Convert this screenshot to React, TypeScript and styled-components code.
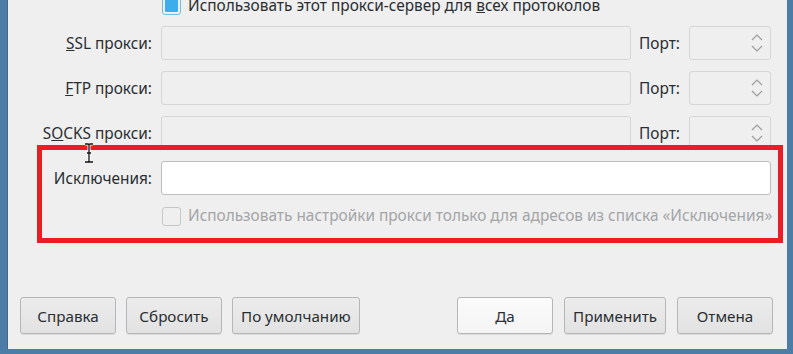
import * as React from 'react'
import styled, { createGlobalStyle } from 'styled-components'

const GlobalStyle = createGlobalStyle`
  html, body {
    margin: 0;
    padding: 0;
    background: #efefef;
  }
  body {
    font-family: "Noto Sans", "Open Sans", sans-serif;
    font-size: 15.4px;
    color: #2a2e32;
  }
`

const Window = styled.div`
  position: relative;
  width: 793px;
  height: 354px;
  box-sizing: border-box;
  background: #efefef;
  border-left: 7px solid #4c7da6;
  border-right: 6px solid #4c7da6;
  border-bottom: 5px solid #4c7da6;
  box-shadow: inset 1px 0 0 #3a6a92;
  display: flex;
  flex-direction: column;
  overflow: hidden;
`

const Form = styled.div`
  display: grid;
  grid-template-columns: 145px 470px 40px 82px;
  grid-template-rows: 20px 34px 34px 34px 34px 20px;
  column-gap: 9px;
  row-gap: 11px;
  margin-top: -5px;
`

const TopRow = styled.div`
  grid-column: 2 / -1;
  display: flex;
  margin-top: 1px;
`

const Label = styled.div<{ $start?: boolean }>`
  justify-self: ${p => (p.$start ? 'start' : 'end')};
  align-self: center;
  white-space: nowrap;
  line-height: 20px;
  margin-top: 2px;
  margin-left: ${p => (p.$start ? '-1px' : '0')};
`

const Field = styled.div<{ $wide?: boolean; $enabled?: boolean }>`
  grid-column: ${p => (p.$wide ? '2 / -1' : 'auto')};
  box-sizing: border-box;
  height: 34px;
  border: 1px solid ${p => (p.$enabled ? '#bcbebf' : '#d6d6d6')};
  border-radius: 3px;
  background: ${p => (p.$enabled ? '#ffffff' : '#efefef')};
`

const Spin = styled.div`
  box-sizing: border-box;
  height: 34px;
  border: 1px solid #d6d6d6;
  border-radius: 3px;
  background: #efefef;
  display: flex;
  align-items: center;
  justify-content: flex-end;
  padding-right: 7px;
`

const CheckRow = styled.label<{ $disabled?: boolean }>`
  grid-column: 2 / -1;
  display: flex;
  align-items: center;
  gap: 7px;
  margin-left: 1px;
  white-space: nowrap;
  line-height: 20px;
  color: ${p => (p.$disabled ? '#a3a5a7' : '#2a2e32')};
`

const CheckBox = styled.span<{ $checked?: boolean }>`
  box-sizing: border-box;
  width: 19px;
  height: 19px;
  flex: none;
  border-radius: 3px;
  border: 1px solid ${p => (p.$checked ? '#6dbde6' : '#c6c7c8')};
  background: #efefef;
  padding: 2px;
  &::after {
    content: '';
    display: ${p => (p.$checked ? 'block' : 'none')};
    width: 100%;
    height: 100%;
    border-radius: 1px;
    background: #3daee9;
  }
`

const ButtonBar = styled.div`
  margin-top: auto;
  display: flex;
  align-items: center;
  padding: 0 14px 15px 13px;
  gap: 10px;
`

const ButtonGroup = styled.div`
  display: flex;
  gap: 11px;
  margin-left: auto;
`

const Button = styled.button<{ $default?: boolean }>`
  box-sizing: border-box;
  height: 37px;
  min-width: 96px;
  padding: 0 8px;
  font-family: inherit;
  font-size: 15.2px;
  color: #2a2e32;
  border: 1px solid #b4b6b8;
  border-radius: 3px;
  background: ${p =>
    p.$default
      ? 'linear-gradient(#fbfbfb, #f4f4f4)'
      : 'linear-gradient(#ececec, #e2e2e2)'};
  box-shadow: 0 1px 0 rgba(0, 0, 0, 0.08);
`

const Highlight = styled.div`
  position: absolute;
  left: 30px;
  top: 145px;
  width: 746px;
  height: 98px;
  box-sizing: border-box;
  border: 5px solid #ec1c24;
  pointer-events: none;
`

const Cursor = styled.svg`
  position: absolute;
  left: 76px;
  top: 143px;
`

const Chevrons = () => (
  <svg width="12" height="18" viewBox="0 0 12 18">
    <path d="M1 6 L6 1 L11 6" fill="none" stroke="#9a9c9e" strokeWidth="1.2" />
    <path d="M1 12 L6 17 L11 12" fill="none" stroke="#9a9c9e" strokeWidth="1.2" />
  </svg>
)

type ProxyRowProps = {
  mnemonic: React.ReactNode
}

const ProxyRow = ({ mnemonic }: ProxyRowProps) => (
  <>
    <Label>{mnemonic} прокси:</Label>
    <Field />
    <Label $start>Порт:</Label>
    <Spin>
      <Chevrons />
    </Spin>
  </>
)

export default function App() {
  return (
    <>
      <GlobalStyle />
      <Window>
        <Form>
          <div />
          <TopRow>
            <CheckRow>
              <CheckBox $checked />
              <span>
                Использовать этот прокси-сервер для <u>в</u>сех протоколов
              </span>
            </CheckRow>
          </TopRow>

          <ProxyRow mnemonic={<><u>S</u>SL</>} />
          <ProxyRow mnemonic={<><u>F</u>TP</>} />
          <ProxyRow mnemonic={<>S<u>O</u>CKS</>} />

          <Label>Исключения:</Label>
          <Field $wide $enabled />

          <div />
          <CheckRow $disabled>
            <CheckBox />
            <span>
              Использовать настройки прокси только для адресов из списка
              «Исключения»
            </span>
          </CheckRow>
        </Form>

        <ButtonBar>
          <Button>Справка</Button>
          <Button>Сбросить</Button>
          <Button>По умолчанию</Button>
          <ButtonGroup>
            <Button $default>Да</Button>
            <Button>Применить</Button>
            <Button>Отмена</Button>
          </ButtonGroup>
        </ButtonBar>

        <Highlight />
        <Cursor width="12" height="20" viewBox="0 0 12 20">
          <path
            d="M2 1 H5 Q6 1 6 2 Q6 1 7 1 H10 M6 2 V18 M2 19 H5 Q6 19 6 18 Q6 19 7 19 H10 M4 10 H8"
            fill="none"
            stroke="#ffffff"
            strokeWidth="3"
          />
          <path
            d="M2 1 H5 Q6 1 6 2 Q6 1 7 1 H10 M6 2 V18 M2 19 H5 Q6 19 6 18 Q6 19 7 19 H10 M4 10 H8"
            fill="none"
            stroke="#111111"
            strokeWidth="1.3"
          />
        </Cursor>
      </Window>
    </>
  )
}
